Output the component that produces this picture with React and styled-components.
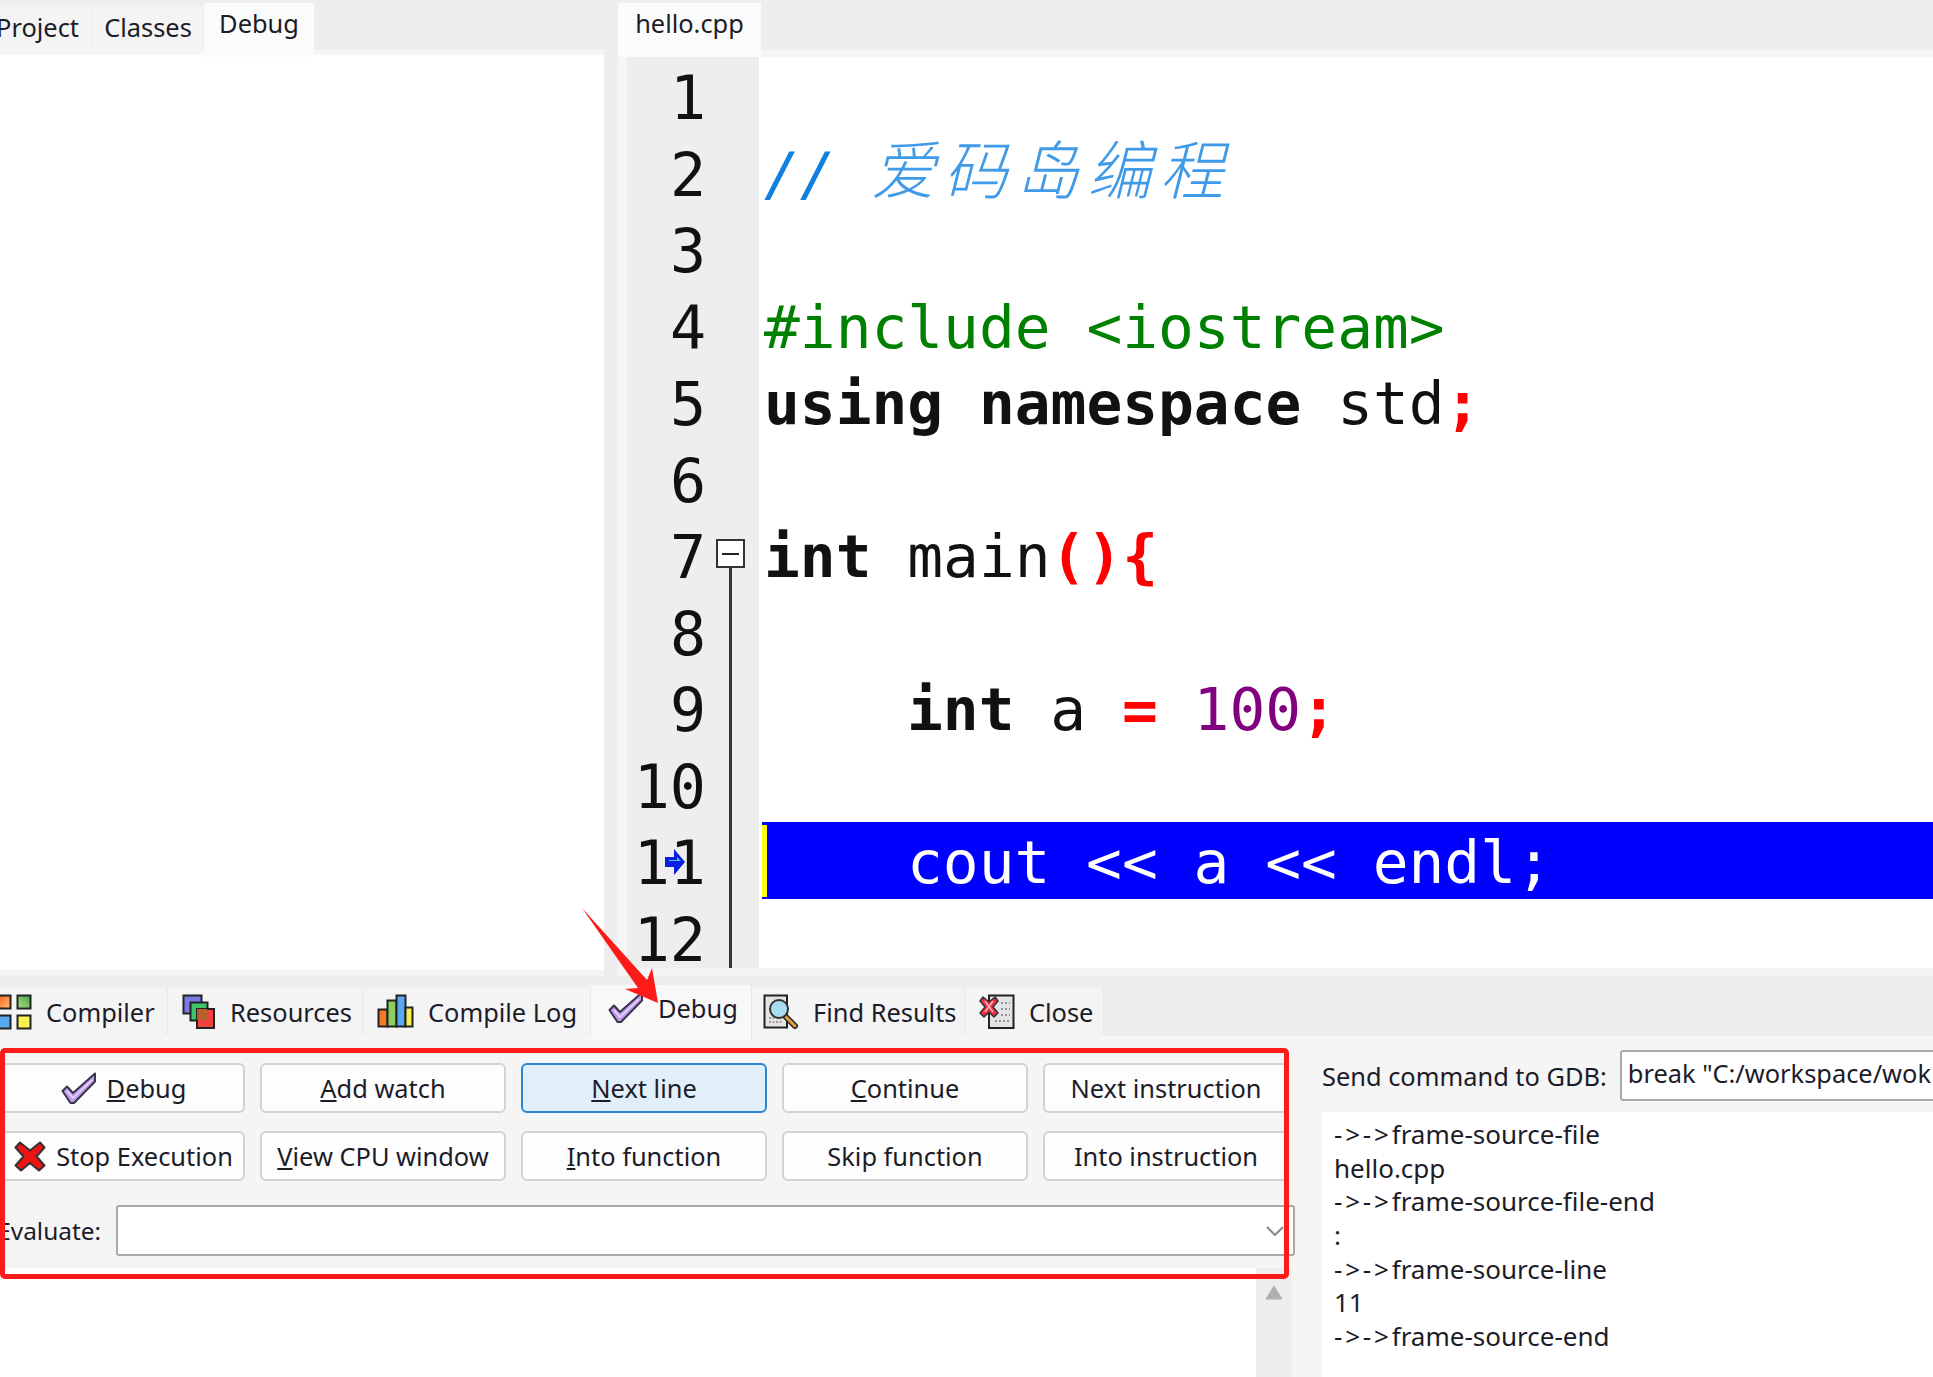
import React from 'react';
import styled, { createGlobalStyle } from 'styled-components';

const UI_FONT = '"Noto Sans", "Open Sans", sans-serif';
const MONO_FONT = '"DejaVu Sans Mono", "Liberation Mono", monospace';

const GlobalStyle = createGlobalStyle`
  html, body {
    margin: 0;
    padding: 0;
    background: #f5f5f5;
    overflow: hidden;
  }
`;

const Window = styled.div`
  position: relative;
  width: 1933px;
  height: 1377px;
  overflow: hidden;
  background: #f5f5f5;
  font-family: ${UI_FONT};
  font-size: 25.4px;
  color: #1c1c28;
`;

const TopArea = styled.div`
  display: flex;
  height: 976px;
`;

const SidePane = styled.div`
  width: 604px;
  display: flex;
  flex-direction: column;
`;

const Sash = styled.div`
  width: 14px;
  background: #eeeeee;
`;

const EditorPane = styled.div`
  flex: 1;
  min-width: 0;
  display: flex;
  flex-direction: column;
`;

const TabStrip = styled.div`
  display: flex;
  height: 50px;
  flex: none;
  background: #eeeeee;
  align-items: flex-end;
`;

const TopTab = styled.div`
  height: ${(p) => (p.$active ? '54px' : '45px')};
  width: ${(p) => p.$w}px;
  margin-right: ${(p) => (p.$active ? 0 : 1)}px;
  margin-bottom: ${(p) => (p.$active ? '-7px' : 0)};
  padding-bottom: ${(p) => (p.$active ? '15px' : '2px')};
  box-sizing: border-box;
  display: flex;
  align-items: center;
  justify-content: ${(p) => (p.$end ? 'flex-end' : 'center')};
  padding-right: ${(p) => (p.$end ? '13px' : 0)};
  background: ${(p) => (p.$active ? '#fbfbfb' : '#f4f4f4')};
  position: relative;
  white-space: nowrap;
`;

const SideBody = styled.div`
  flex: 1;
  margin-top: 5px;
  margin-bottom: 6px;
  background: #ffffff;
`;

const EditorBody = styled.div`
  flex: 1;
  display: flex;
  margin: 7px 0 8px 9px;
  min-height: 0;
  background: #ffffff;
`;

const Gutter = styled.div`
  position: relative;
  width: 132px;
  flex: none;
  background: #eeeeee;
  box-sizing: border-box;
  padding-right: 53px;
`;

const LineNumber = styled.div`
  height: 76.5px;
  line-height: 83px;
  text-align: right;
  font-family: ${MONO_FONT};
  font-size: 60px;
  color: #111111;
`;

const FoldBox = styled.div`
  position: absolute;
  left: 89px;
  top: 482px;
  width: 29px;
  height: 29px;
  box-sizing: border-box;
  background: #ffffff;
  border: 2px solid #333333;
  display: flex;
  align-items: center;
  justify-content: center;

  &::after {
    content: '';
    width: 17px;
    height: 2px;
    background: #222222;
  }
`;

const FoldLine = styled.div`
  position: absolute;
  left: 102px;
  top: 511px;
  bottom: 0;
  width: 3px;
  background: #333333;
`;

const LineMarker = styled.svg`
  position: absolute;
  left: 38px;
  top: 792px;
`;

const CodeArea = styled.div`
  flex: 1;
  min-width: 0;
  padding-left: 3px;
  font-family: ${MONO_FONT};
  font-size: 59.5px;
  color: #111111;
`;

const CodeLine = styled.div`
  position: relative;
  height: 76.5px;
  line-height: 81px;
  padding-left: ${(p) => (p.$indent ? 145 : 2)}px;
  white-space: pre;
  background: ${(p) => (p.$current ? '#0000ff' : 'transparent')};
  color: ${(p) => (p.$current ? '#ffffff' : 'inherit')};
`;

const Caret = styled.div`
  position: absolute;
  left: 0;
  top: 3px;
  bottom: 2px;
  width: 5px;
  background: #ffff00;
`;

const Keyword = styled.span`
  font-weight: 700;
`;

const Punct = styled.span`
  font-weight: 700;
  color: #ff0000;
`;

const Directive = styled.span`
  color: #008000;
`;

const NumberLit = styled.span`
  color: #800080;
`;

const Comment = styled.span`
  color: #0f7fe0;
  font-style: italic;
`;

const CommentCjk = styled.span`
  font-family: "Noto Sans CJK SC", sans-serif;
  font-weight: 300;
  font-size: 64px;
  line-height: 0;
  letter-spacing: 8px;
  vertical-align: 1px;
  color: #3f9ae8;
`;

const ToolStrip = styled.div`
  display: flex;
  height: 60px;
  box-sizing: border-box;
  padding-top: 12px;
  background: #eeeeee;
  align-items: flex-start;
`;

const BottomTab = styled.div`
  position: relative;
  height: ${(p) => (p.$active ? '55px' : '47px')};
  margin-top: ${(p) => (p.$active ? '-3px' : 0)};
  margin-bottom: ${(p) => (p.$active ? '-8px' : 0)};
  margin-left: ${(p) => p.$shift || 0}px;
  width: ${(p) => p.$w}px;
  flex: none;
  box-sizing: border-box;
  padding-left: ${(p) => p.$pad}px;
  padding-bottom: ${(p) => (p.$active ? '10px' : 0)};
  display: flex;
  align-items: center;
  gap: 14px;
  background: ${(p) => (p.$active ? '#f8f8f8' : '#f4f4f4')};
  border-right: 1px solid #e8e8e8;
  white-space: nowrap;
`;

const BottomArea = styled.div`
  display: flex;
  height: 341px;
`;

const DebugColumn = styled.div`
  width: 1322px;
  flex: none;
  position: relative;
`;

const ButtonGrid = styled.div`
  display: grid;
  grid-template-columns: repeat(5, 246px);
  grid-auto-rows: 50px;
  column-gap: 15px;
  row-gap: 18px;
  margin: 27px 0 0 -1px;
`;

const ActionButton = styled.div`
  box-sizing: border-box;
  display: flex;
  align-items: center;
  justify-content: center;
  gap: 10px;
  padding-left: ${(p) => (p.$withIcon ? '3px' : 0)};
  background: ${(p) => (p.$focused ? '#e0eff9' : '#fdfdfd')};
  border: 2px solid ${(p) => (p.$focused ? '#2a86d0' : '#d2d2d2')};
  border-radius: 6px;
  white-space: nowrap;
`;

const EvaluateRow = styled.div`
  display: flex;
  align-items: center;
  margin-top: 24px;
  height: 51px;
  margin-right: 27px;
`;

const EvaluateLabel = styled.div`
  flex: 0 0 101px;
  min-width: 0;
  display: flex;
  justify-content: flex-end;
  margin-right: 15px;
  font-size: 24.4px;
  white-space: nowrap;
`;

const Combo = styled.div`
  flex: 1;
  height: 100%;
  box-sizing: border-box;
  background: #ffffff;
  border: 2px solid #a9a9a9;
  border-radius: 3px;
  display: flex;
  align-items: center;
  justify-content: flex-end;
  padding-right: 9px;
`;

const ListRow = styled.div`
  display: flex;
  margin-top: 12px;
  height: 120px;
`;

const WatchList = styled.div`
  width: 1256px;
  background: #ffffff;
`;

const Scrollbar = styled.div`
  width: 36px;
  background: #eeeeee;
  display: flex;
  justify-content: center;
  padding-top: 17px;
  box-sizing: border-box;
`;

const GdbColumn = styled.div`
  flex: 1;
  min-width: 0;
`;

const CommandRow = styled.div`
  display: flex;
  align-items: center;
  gap: 13px;
  margin: 14px -12px 0 0;
  height: 51px;
`;

const CommandLabel = styled.div`
  white-space: nowrap;
`;

const CommandInput = styled.div`
  flex: 1;
  min-width: 0;
  height: 100%;
  box-sizing: border-box;
  background: #ffffff;
  border: 2px solid #a9a9a9;
  border-radius: 3px;
  padding-left: 6px;
  line-height: 42px;
  white-space: nowrap;
  overflow: hidden;
`;

const OutputPane = styled.div`
  margin-top: 11px;
  height: 300px;
  background: #ffffff;
  padding: 6px 0 0 12px;
  font-size: 26px;
`;

const OutputLine = styled.div`
  height: 33.7px;
  line-height: 33.7px;
  white-space: pre;
`;

const ArrowPrefix = styled.span`
  letter-spacing: 2.8px;
`;

const RedFrame = styled.div`
  position: absolute;
  left: 0;
  top: 1048px;
  width: 1289px;
  height: 231px;
  box-sizing: border-box;
  border: 5px solid #ff1a1a;
  border-radius: 5px;
  pointer-events: none;
`;

const RedArrow = styled.svg`
  position: absolute;
  left: 570px;
  top: 900px;
  pointer-events: none;
`;

const Icon = styled.svg`
  flex: none;
  display: block;
`;

const GridIcon = () => (
  <Icon width="36" height="36" viewBox="0 0 36 36">
    <defs>
      <linearGradient id="go" x1="0" y1="0" x2="1" y2="1">
        <stop offset="0" stopColor="#ff5a2a" />
        <stop offset="1" stopColor="#ffc36a" />
      </linearGradient>
      <linearGradient id="gg" x1="0" y1="1" x2="1" y2="0">
        <stop offset="0" stopColor="#b5dc8a" />
        <stop offset="1" stopColor="#3fa53f" />
      </linearGradient>
    </defs>
    <rect x="1.5" y="1.5" width="13" height="13" fill="url(#go)" stroke="#222" strokeWidth="2" />
    <rect x="21.5" y="1.5" width="13" height="13" fill="url(#gg)" stroke="#222" strokeWidth="2" />
    <rect x="1.5" y="21.5" width="13" height="13" fill="#58a8f0" stroke="#222" strokeWidth="2" />
    <rect x="21.5" y="21.5" width="13" height="13" fill="#f8f050" stroke="#222" strokeWidth="2" />
  </Icon>
);

const LayersIcon = () => (
  <Icon width="34" height="36" viewBox="0 0 34 36">
    <rect x="1.5" y="1.5" width="18" height="18" fill="#7c78e8" stroke="#222" strokeWidth="2" />
    <rect x="8.5" y="8.5" width="17" height="18" fill="#3fc46a" stroke="#222" strokeWidth="2" />
    <rect x="15" y="15" width="17" height="19" fill="#f04040" stroke="#222" strokeWidth="2" />
    <rect x="15" y="15" width="10" height="11" fill="#b8602c" />
  </Icon>
);

const BarsIcon = () => (
  <Icon width="37" height="35" viewBox="0 0 37 35">
    <rect x="1.5" y="15.5" width="9" height="17" fill="#f57a25" stroke="#222" strokeWidth="2" />
    <rect x="10.5" y="6.5" width="9" height="26" fill="#8ccf5c" stroke="#222" strokeWidth="2" />
    <rect x="19.5" y="1.5" width="9" height="31" fill="#5aa8f0" stroke="#222" strokeWidth="2" />
    <rect x="28.5" y="13.5" width="7" height="19" fill="#f8f050" stroke="#222" strokeWidth="2" />
  </Icon>
);

const CheckIcon = () => (
  <Icon width="36" height="33" viewBox="0 0 36 33">
    <path
      d="M1.5 19 L6 14.5 L12 21 L34 1.5 L34 9.5 L13 31 L9.5 31 Z"
      fill="#c09cf0"
      stroke="#3a3548"
      strokeWidth="2"
      strokeLinejoin="round"
    />
    <path d="M6 19 L12 26 L31 8" fill="none" stroke="#e8dcfa" strokeWidth="1.5" />
  </Icon>
);

const StopIcon = () => (
  <Icon width="32" height="31" viewBox="0 0 32 31">
    <path
      d="M6 1.5 L16 9.5 L26 1.5 L30.5 6.5 L22.5 15.5 L30.5 24.5 L25 29.5 L16 22 L7 29.5 L1.5 24.5 L9.5 15.5 L1.5 6.5 Z"
      fill="#ee1414"
      stroke="#333"
      strokeWidth="2"
      strokeLinejoin="round"
    />
  </Icon>
);

const FindIcon = () => (
  <Icon width="36" height="36" viewBox="0 0 36 36">
    <path d="M1.5 1.5 H24 V33.5 H1.5 Z" fill="#e4e4e4" stroke="#222" strokeWidth="2" />
    <path d="M6 24 H20 M6 28 H20" stroke="#888" strokeWidth="1.5" strokeDasharray="2 1.5" />
    <path d="M22 22 L32 32" stroke="#222" strokeWidth="6" strokeLinecap="round" />
    <path d="M23 23 L32 32" stroke="#e0a040" strokeWidth="3" strokeLinecap="round" />
    <circle cx="16" cy="15" r="9" fill="#a8dcf0" stroke="#333" strokeWidth="2" />
  </Icon>
);

const CloseIcon = () => (
  <Icon width="36" height="36" viewBox="0 0 36 36">
    <path d="M10 1.5 H34.5 V34 H10 Z" fill="#e4e4e4" stroke="#222" strokeWidth="2" />
    <path d="M22 9 H31 M22 15 H31 M22 21 H31 M16 27 H31" stroke="#777" strokeWidth="1.5" strokeDasharray="2 2" />
    <path
      d="M4 3 L10 8 L16 3 L19 7 L14 13 L19 19 L15 23 L10 18 L5 23 L1 19 L6 13 L1 7 Z"
      fill="#f03048"
      stroke="#333"
      strokeWidth="1.5"
      strokeLinejoin="round"
    />
    <path d="M6 7 L14 18 M14 7 L6 18" stroke="#ffb0b8" strokeWidth="1.5" />
  </Icon>
);

const numbers = [1, 2, 3, 4, 5, 6, 7, 8, 9, 10, 11, 12];

const buttons = [
  { icon: <CheckIcon />, key: 'D', rest: 'ebug' },
  { key: 'A', rest: 'dd watch' },
  { key: 'N', rest: 'ext line', focused: true },
  { key: 'C', rest: 'ontinue' },
  { rest: 'Next instruction' },
  { icon: <StopIcon />, rest: 'Stop Execution' },
  { key: 'V', rest: 'iew CPU window' },
  { key: 'I', rest: 'nto function' },
  { rest: 'Skip function' },
  { rest: 'Into instruction' },
];

const output = [
  '->->frame-source-file',
  'hello.cpp',
  '->->frame-source-file-end',
  ':',
  '->->frame-source-line',
  '11',
  '->->frame-source-end',
];

export default function App() {
  return (
    <Window>
      <GlobalStyle />
      <TopArea>
        <SidePane>
          <TabStrip>
            <TopTab $w={92} $end>Project</TopTab>
            <TopTab $w={110}>Classes</TopTab>
            <TopTab $w={110} $active>Debug</TopTab>
          </TabStrip>
          <SideBody />
        </SidePane>
        <Sash />
        <EditorPane>
          <TabStrip>
            <TopTab $w={143} $active>hello.cpp</TopTab>
          </TabStrip>
          <EditorBody>
            <Gutter>
              {numbers.map((n) => (
                <LineNumber key={n}>{n}</LineNumber>
              ))}
              <FoldBox />
              <FoldLine />
              <LineMarker width="20" height="26" viewBox="0 0 20 26">
                <path d="M0 8 H9 V0 L20 13 L9 26 V18 H0 Z" fill="#0a1ee0" />
                <path d="M4 11 H12 V8 L16 12 H4 Z" fill="#30d0e0" />
              </LineMarker>
            </Gutter>
            <CodeArea>
              <CodeLine />
              <CodeLine>
                <Comment>// </Comment>
                <Comment><CommentCjk>爱码岛编程</CommentCjk></Comment>
              </CodeLine>
              <CodeLine />
              <CodeLine>
                <Directive>#include &lt;iostream&gt;</Directive>
              </CodeLine>
              <CodeLine>
                <Keyword>using namespace</Keyword> std<Punct>;</Punct>
              </CodeLine>
              <CodeLine />
              <CodeLine>
                <Keyword>int</Keyword> main<Punct>(){'{'}</Punct>
              </CodeLine>
              <CodeLine />
              <CodeLine $indent>
                <Keyword>int</Keyword> a <Punct>=</Punct> <NumberLit>100</NumberLit><Punct>;</Punct>
              </CodeLine>
              <CodeLine />
              <CodeLine $indent $current>
                <Caret />
                cout &lt;&lt; a &lt;&lt; endl;
              </CodeLine>
              <CodeLine />
            </CodeArea>
          </EditorBody>
        </EditorPane>
      </TopArea>

      <ToolStrip>
        <BottomTab $w={172} $pad={0} $shift={-4}><GridIcon />Compiler</BottomTab>
        <BottomTab $w={195} $pad={14}><LayersIcon />Resources</BottomTab>
        <BottomTab $w={228} $pad={14}><BarsIcon />Compile Log</BottomTab>
        <BottomTab $w={161} $pad={17} $active><CheckIcon />Debug</BottomTab>
        <BottomTab $w={213} $pad={11}><FindIcon />Find Results</BottomTab>
        <BottomTab $w={139} $pad={14}><CloseIcon />Close</BottomTab>
      </ToolStrip>

      <BottomArea>
        <DebugColumn>
          <ButtonGrid>
            {buttons.map((b) => (
              <ActionButton key={(b.key || '') + b.rest} $focused={b.focused} $withIcon={!!b.icon}>
                {b.icon}
                <span>
                  {b.key && <u>{b.key}</u>}
                  {b.rest}
                </span>
              </ActionButton>
            ))}
          </ButtonGrid>
          <EvaluateRow>
            <EvaluateLabel>Evaluate:</EvaluateLabel>
            <Combo>
              <Icon width="18" height="10" viewBox="0 0 18 10">
                <path d="M1 1 L9 9 L17 1" fill="none" stroke="#888" strokeWidth="2" />
              </Icon>
            </Combo>
          </EvaluateRow>
          <ListRow>
            <WatchList />
            <Scrollbar>
              <Icon width="18" height="15" viewBox="0 0 18 15">
                <path d="M9 1 L17 14 H1 Z" fill="#b0b0b0" stroke="#b0b0b0" strokeLinejoin="round" />
              </Icon>
            </Scrollbar>
          </ListRow>
        </DebugColumn>
        <GdbColumn>
          <CommandRow>
            <CommandLabel>Send command to GDB:</CommandLabel>
            <CommandInput>break "C:/workspace/wok</CommandInput>
          </CommandRow>
          <OutputPane>
            {output.map((line) => (
              <OutputLine key={line}>
                {line.startsWith('->->') ? (
                  <>
                    <ArrowPrefix>-&gt;-&gt;</ArrowPrefix>
                    {line.slice(4)}
                  </>
                ) : (
                  line
                )}
              </OutputLine>
            ))}
          </OutputPane>
        </GdbColumn>
      </BottomArea>

      <RedFrame />
      <RedArrow width="100" height="110" viewBox="0 0 100 110">
        <path d="M12 8 L77 80 L82 68 L88 103 L55 89 L68 88 Z" fill="#ff1a1a" />
      </RedArrow>
    </Window>
  );
}
